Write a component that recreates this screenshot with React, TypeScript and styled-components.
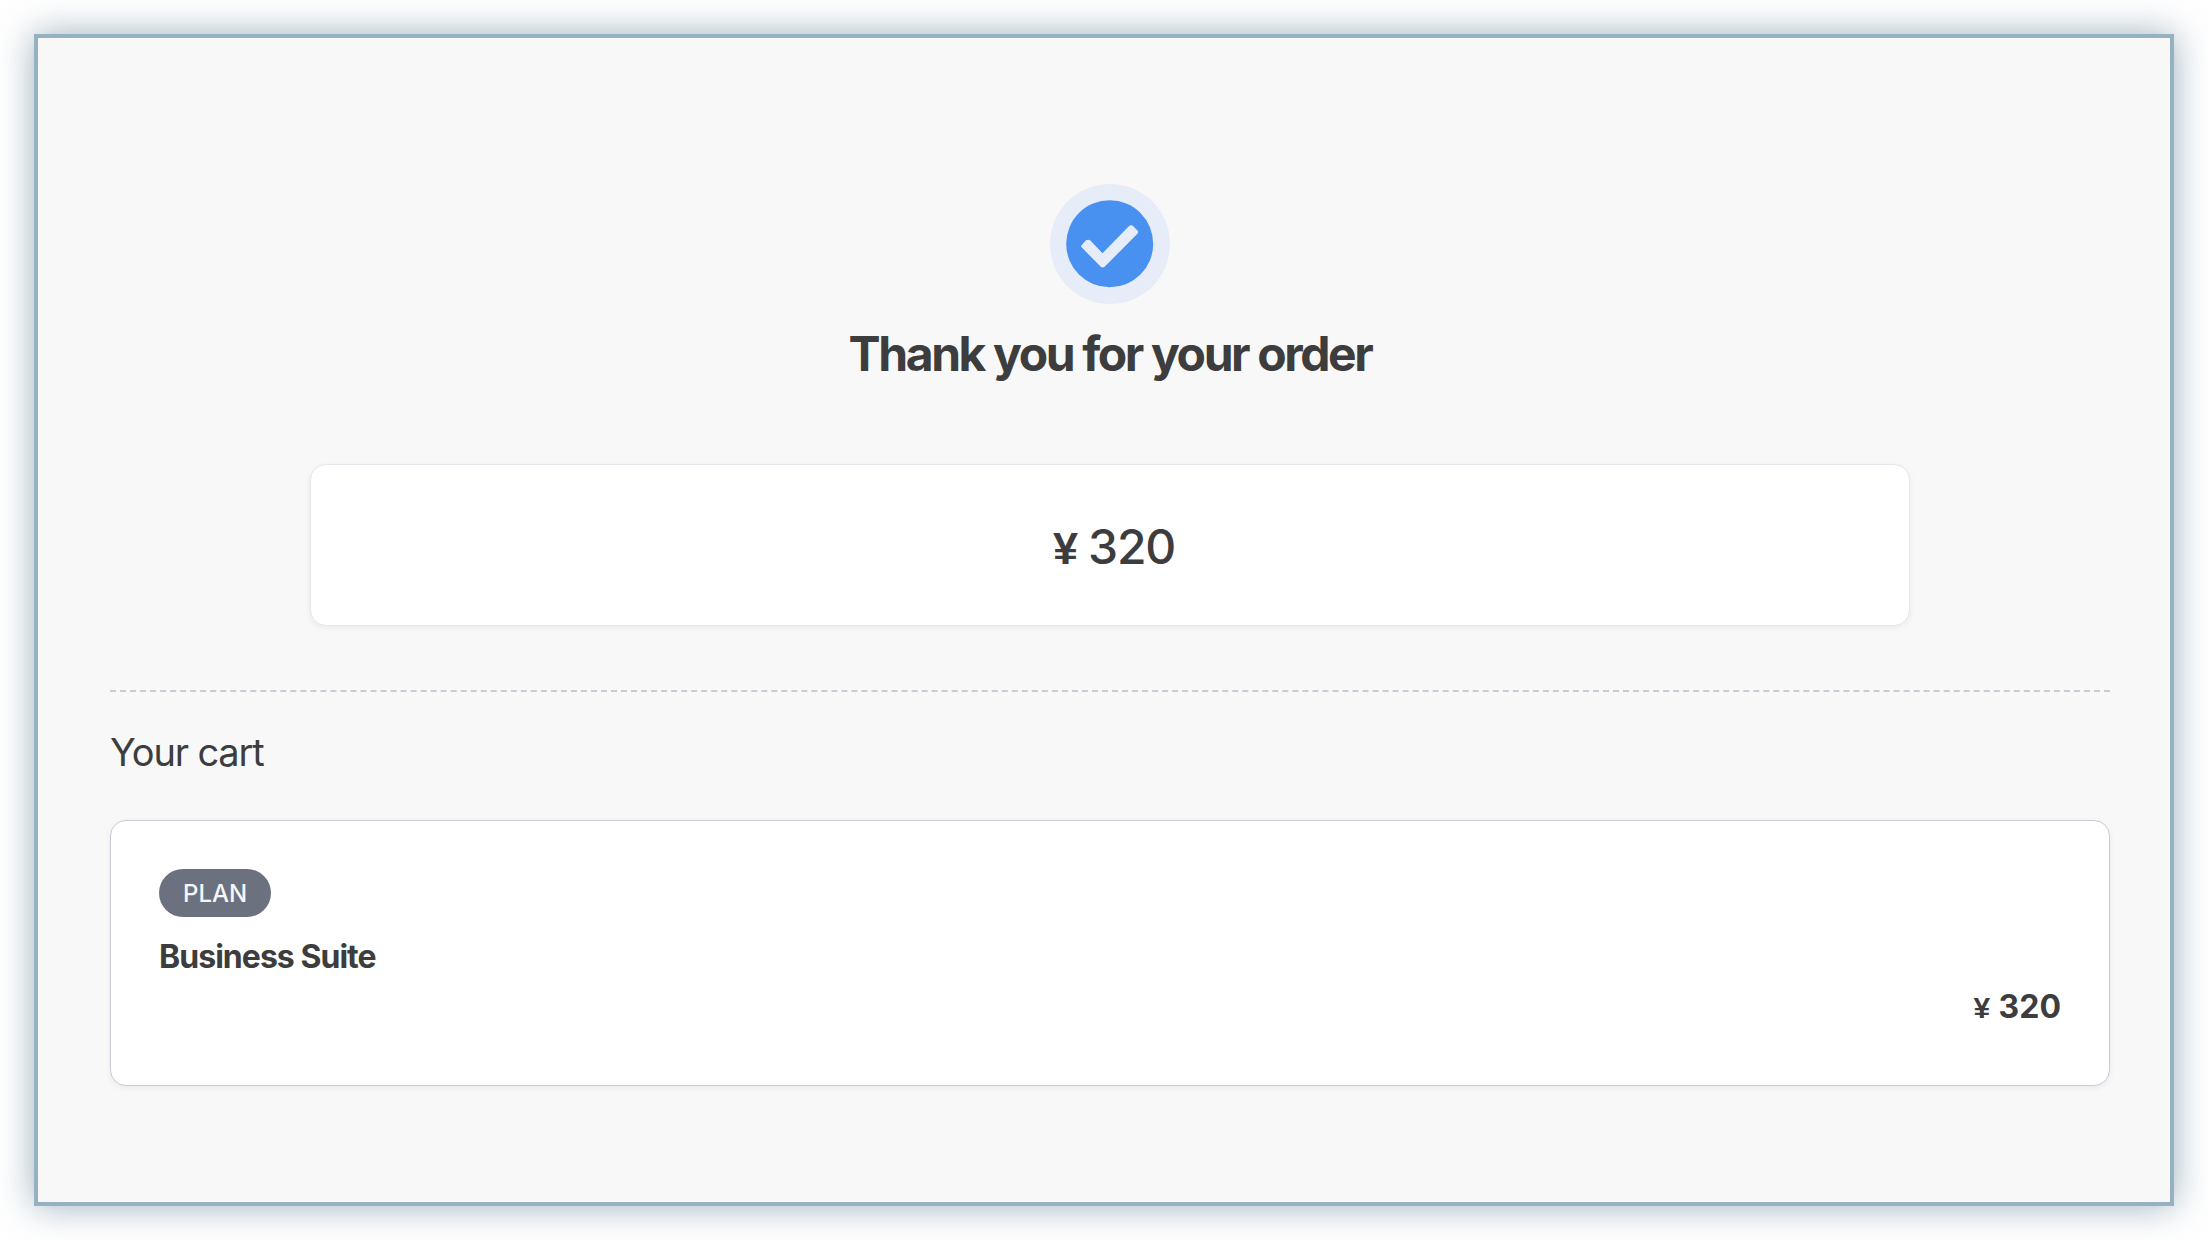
import React from "react";
import styled, { createGlobalStyle } from "styled-components";

const GlobalStyle = createGlobalStyle`
  *, *::before, *::after { box-sizing: border-box; }
  body {
    margin: 0;
    background: #ffffff;
    color: #3d3d3d;
    font-family: Inter, "Liberation Sans", sans-serif;
  }
`;

const Page = styled.div`
  display: flex;
  min-height: 100vh;
  padding: 34px;
`;

const Panel = styled.main`
  flex: 1;
  padding: 146px 60px 116px 72px;
  background: #f8f8f8;
  border: 4px solid #96b1bf;
  box-shadow: 0 0 34px rgba(71, 111, 139, 0.55);
`;

const Confirmation = styled.section`
  display: flex;
  flex-direction: column;
  align-items: center;
  padding-bottom: 64px;
`;

const Badge = styled.div`
  display: grid;
  place-items: center;
  width: 120px;
  height: 120px;
  border-radius: 50%;
  background: #e7edf8;

  svg {
    display: block;
    width: 88px;
    height: 88px;
  }
`;

const Title = styled.h1`
  margin: 20px 0 80px;
  font-size: 48px;
  line-height: 60px;
  font-weight: 700;
  letter-spacing: -0.05em;
`;

const Card = styled.div`
  background: #ffffff;
  border: 1px solid #e6e6ec;
  border-radius: 16px;
  box-shadow: 0 2px 6px rgba(0, 0, 0, 0.06);
`;

const TotalCard = styled(Card)`
  display: flex;
  justify-content: center;
  width: 80%;
  padding: 52px 0 48px 8px;
`;

const Price = styled.p<{ $size: number; $weight: number }>`
  margin: 0;
  font-size: ${(p) => p.$size}px;
  line-height: ${(p) => p.$size + 12}px;
  font-weight: ${(p) => p.$weight};
  letter-spacing: -0.025em;
`;

const Currency = styled.span`
  font-family: "Liberation Sans", Arial, sans-serif;
  font-size: 0.9375em;
  font-weight: 700;
  line-height: 1;
`;

const Divider = styled.hr`
  margin: 0;
  border: 0;
  border-top: 2px dashed #cbcbd6;
`;

const CartTitle = styled.h2`
  margin: 36px 0 44px;
  font-size: 38px;
  line-height: 48px;
  font-weight: 400;
  letter-spacing: -0.03em;
`;

const CartItem = styled(Card)`
  display: flex;
  flex-direction: column;
  align-items: flex-start;
  padding: 48px 48px 56px;
  border-color: #cbcbd6;
`;

const Tag = styled.span`
  padding: 2px 24px 0;
  border-radius: 24px;
  background: #6c7180;
  color: #f5f6f8;
  font-size: 24px;
  line-height: 46px;
  font-weight: 500;
`;

const ItemName = styled.h3`
  margin: 18px 0 6px;
  font-size: 32px;
  line-height: 44px;
  font-weight: 700;
  letter-spacing: -0.03em;
`;

const ItemPrice = styled(Price)`
  align-self: flex-end;
  letter-spacing: 0;
`;

export default function App() {
  return (
    <>
      <GlobalStyle />
      <Page>
        <Panel>
          <Confirmation>
            <Badge>
              <svg viewBox="0 0 88 88" aria-hidden="true">
                <circle cx="43.7" cy="43.8" r="43.5" fill="#4991f1" />
                <path
                  d="M15.6 45.2Q14.6 46.4 15.8 47.6L34.8 66.8Q36.7 68.4 38.6 66.8L71.4 33.7Q72.8 32 71.4 30.4L67.3 26.2Q65 24.4 62.6 26.4L36.5 53.2L24.4 40.6Q22.2 38.8 19.8 40.6Z"
                  fill="#e7edf8"
                />
              </svg>
            </Badge>
            <Title>Thank you for your order</Title>
            <TotalCard>
              <Price $size={48} $weight={500}>
                <Currency>¥ </Currency>320
              </Price>
            </TotalCard>
          </Confirmation>
          <Divider />
          <CartTitle>Your cart</CartTitle>
          <CartItem>
            <Tag>PLAN</Tag>
            <ItemName>Business Suite</ItemName>
            <ItemPrice $size={32} $weight={700}>
              <Currency>¥ </Currency>320
            </ItemPrice>
          </CartItem>
        </Panel>
      </Page>
    </>
  );
}
